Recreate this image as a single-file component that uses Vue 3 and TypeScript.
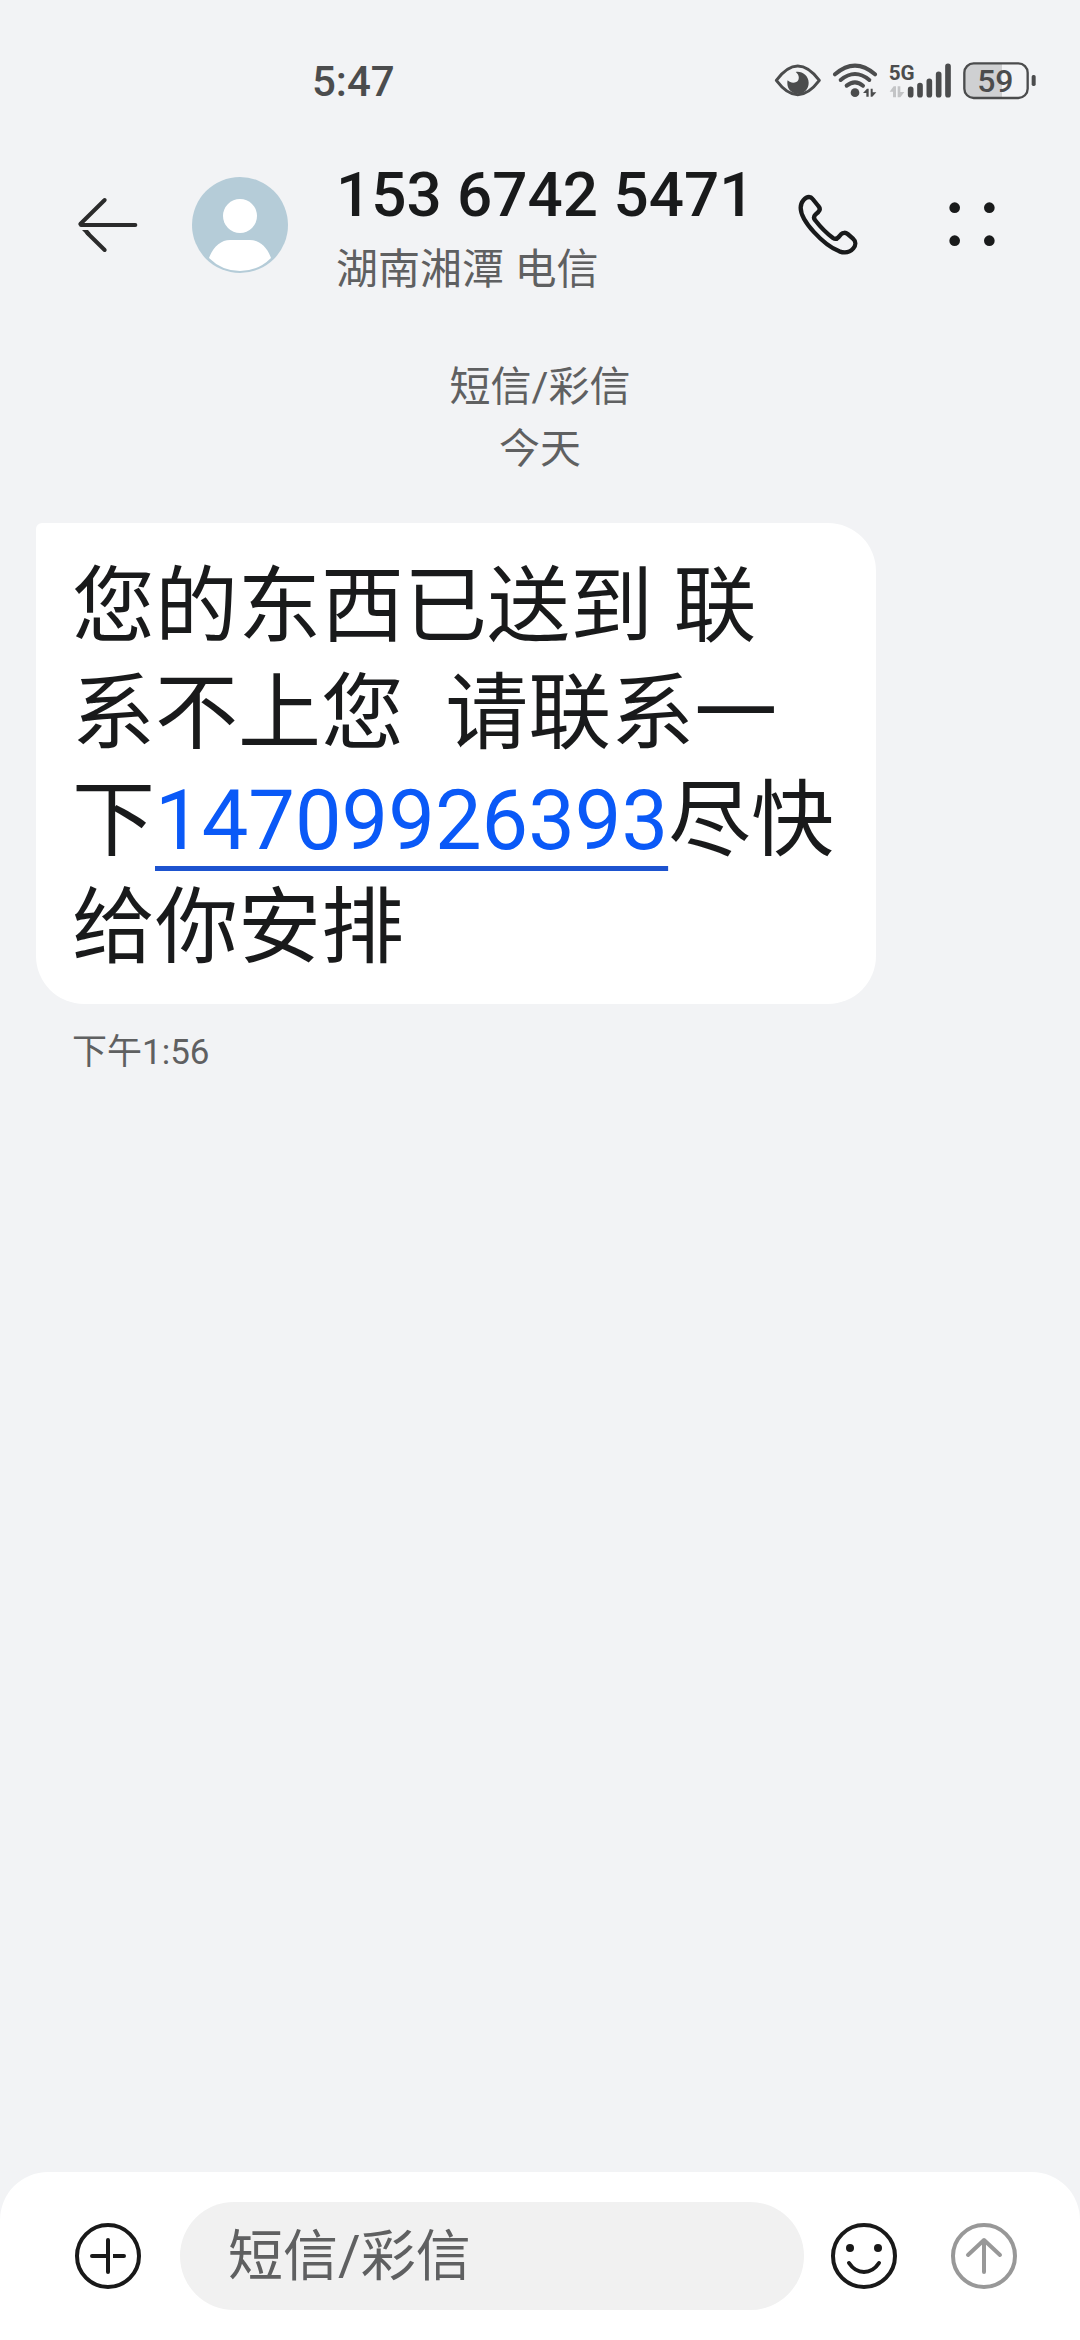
<script setup lang="ts">
import { ref } from 'vue'

const contact = { number: '153 6742 5471', region: '湖南湘潭 电信' }
const message = {
  before: '您的东西已送到 联系不上您  请联系一下',
  phone: '14709926393',
  after: '尽快给你安排',
  time: '下午1:56',
}
const draft = ref('')
</script>

<template>
  <div class="screen">
    <div class="status">
      <span class="clock">5:47</span>
      <div class="indicators">
        <svg width="48" height="38" viewBox="42 36 144 114" aria-hidden="true">
          <path d="M49 91Q113 5 178 91Q113 177 49 91Z" fill="none" stroke="#4b4c4d" stroke-width="9" stroke-linejoin="round" />
          <path d="M107 66C124 62 146 76 146 98C146 116 134 131 114 131C94 131 82 117 82 99C82 96 82 94 83 91C92 101 110 100 115 90C119 81 115 72 107 66Z" fill="#4b4c4d" />
        </svg>
        <svg width="46" height="38" viewBox="216 36 138 114" aria-hidden="true">
          <g fill="none" stroke="#4b4c4d" stroke-width="12" stroke-linecap="round">
            <path d="M225 73Q285 21 345 73" />
            <path d="M242 90Q285 54 328 90" />
            <path d="M260 107Q285 87 309 107" />
          </g>
          <circle cx="285" cy="128" r="13" fill="#4b4c4d" />
          <path d="M309 129L321 116H326V140H319V129ZM349 127L337 140H332V116H338V127Z" fill="#4b4c4d" />
        </svg>
        <svg width="64" height="38" viewBox="384 36 192 114" aria-hidden="true">
          <text x="386" y="91" class="net">5G</text>
          <path d="M389 125L401 109H408V142H399V125ZM433 126L421 142H413V109H421V126Z" fill="#c3c4c6" />
          <g stroke="#4b4c4d" stroke-width="17" stroke-linecap="round">
            <path d="M452 118V134M480 107V134M508 94V134M536 73V134M564 49V134" />
          </g>
        </svg>
        <svg width="75" height="38" viewBox="606 36 225 114" role="img" aria-label="59%">
          <path d="M640 39H726V144H640Q613 144 613 116V67Q613 39 640 39Z" fill="#cfd0d2" />
          <rect x="613" y="40" width="190" height="104" rx="28" fill="none" stroke="#4b4c4d" stroke-width="7" />
          <rect x="815" y="75" width="12" height="33" rx="5" fill="#4b4c4d" />
          <text x="706" y="126" text-anchor="middle" class="charge">59</text>
        </svg>
      </div>
    </div>

    <header class="header">
      <button class="icon" type="button" aria-label="返回">
        <svg width="72" height="72" viewBox="36 117 216 216">
          <g fill="none" stroke="#2b2b2b" stroke-width="12" stroke-linecap="round" stroke-linejoin="round">
            <path d="M134 150L61 222M63 225H226" />
            <path d="M134 300L82 249" />
          </g>
          <path d="M66 240H84L92 250L83 257Z" fill="#2b2b2b" />
        </svg>
      </button>
      <svg class="avatar" width="96" height="96" viewBox="0 0 96 96" aria-hidden="true">
        <circle cx="48" cy="48" r="48" fill="#b5ccd8" />
        <circle cx="48" cy="39" r="17" fill="#fff" />
        <path d="M17 81C21 70 29 63 38 63H58C68 63 75 70 79 81Q66 94 48 94Q30 94 17 81Z" fill="#fff" />
      </svg>
      <div class="who">
        <h1 class="number">{{ contact.number }}</h1>
        <p class="region">{{ contact.region }}</p>
      </div>
      <button class="icon" type="button" aria-label="拨打电话">
        <svg width="72" height="72" viewBox="96 87 216 216">
          <path d="M122 143C122 126 136 111 147 111C152 111 155 113 158 117L175 138C181 145 181 150 175 156L167 163C161 169 160 174 165 180C182 202 200 220 219 234C225 238 231 237 236 231L243 223C249 217 257 217 263 222L279 236C288 244 288 256 280 265C268 279 255 280 238 274C190 255 122 183 122 143Z" fill="none" stroke="#191a1b" stroke-width="13" stroke-linejoin="round" />
        </svg>
      </button>
      <button class="icon" type="button" aria-label="更多">
        <svg width="72" height="72" viewBox="528 87 216 216" fill="#191a1b">
          <circle cx="584" cy="143" r="16" />
          <circle cx="688" cy="143" r="16" />
          <circle cx="584" cy="242" r="16" />
          <circle cx="688" cy="242" r="16" />
        </svg>
      </button>
    </header>

    <main class="thread">
      <p class="label">短信/彩信</p>
      <p class="label">今天</p>
      <p class="bubble">{{ message.before }}<a class="tel" :href="'tel:' + message.phone">{{ message.phone }}</a>{{ message.after }}</p>
      <time class="time" datetime="13:56">{{ message.time }}</time>
    </main>

    <form class="composer" @submit.prevent>
      <button class="icon" type="button" aria-label="添加">
        <svg width="72" height="72" viewBox="-36 -36 72 72" fill="none" stroke="#191919" stroke-width="4" stroke-linecap="round">
          <circle r="31" />
          <path d="M0 -16V16M-16 0H0M7 0H16" />
          <path d="M5 0H8" stroke-linecap="butt" />
        </svg>
      </button>
      <input v-model="draft" class="field" type="text" placeholder="短信/彩信" aria-label="短信/彩信" />
      <button class="icon" type="button" aria-label="表情">
        <svg width="72" height="72" viewBox="-36 -36 72 72" fill="none" stroke="#191919" stroke-width="4" stroke-linecap="round">
          <circle r="31" />
          <circle cx="-14" cy="-8" r="4" fill="#191919" stroke="none" />
          <circle cx="14" cy="-8" r="4" fill="#191919" stroke="none" />
          <path d="M-15 7Q-9 16 0 16Q9 16 15 7" />
        </svg>
      </button>
      <button class="icon send" type="submit" aria-label="发送">
        <svg width="72" height="72" viewBox="-36 -36 72 72" fill="none" stroke="#989898" stroke-width="4" stroke-linecap="round" stroke-linejoin="round">
          <circle r="31" />
          <path d="M0 16V-15M-16 -1L0 -16L16 -1" />
        </svg>
      </button>
    </form>
  </div>
</template>

<style>
body {
  background: #f2f3f5;
}
</style>

<style scoped>
.screen {
  display: flex;
  flex-direction: column;
  min-height: 100vh;
  background: #f2f3f5;
  color: #191a1b;
  font-family: Roboto, "Noto Sans CJK SC", sans-serif;
}

svg {
  display: block;
}

h1,
p {
  margin: 0;
}

.icon {
  flex: none;
  width: 72px;
  height: 72px;
  padding: 0;
  border: 0;
  background: none;
}

.status {
  display: flex;
  align-items: center;
  justify-content: space-between;
  box-sizing: border-box;
  height: 120px;
  padding: 42px 43px 0 312px;
  color: #4b4c4d;
}

.clock {
  padding-top: 2px;
  font-size: 42px;
  line-height: 48px;
  font-weight: 500;
}

.indicators {
  display: flex;
  gap: 10px;
}

.net {
  font-size: 62px;
  font-weight: 700;
  fill: #4b4c4d;
}

.charge {
  font-size: 96px;
  font-weight: 500;
  fill: #4b4c4d;
}

.header {
  display: flex;
  align-items: center;
  height: 210px;
  padding: 0 72px;
}

.avatar {
  flex: none;
  margin: 0 48px;
}

.who {
  flex: 1;
  min-width: 0;
  margin-top: 4px;
}

.number {
  font-size: 62px;
  line-height: 72px;
  font-weight: 500;
  white-space: nowrap;
}

.region {
  margin-top: 14px;
  font-size: 42px;
  line-height: 50px;
  color: #5f6061;
}

.header .icon:last-child {
  margin-left: 72px;
}

.thread {
  flex: 1;
  padding: 26px 36px 0;
}

.label {
  font-size: 41px;
  line-height: 62px;
  text-align: center;
  color: #5f6061;
}

.bubble {
  margin: 43px 168px 25px 0;
  padding: 30px 38px 23px 36px;
  border-radius: 6px 48px 48px 48px;
  background: #fff;
  font-size: 83px;
  line-height: 107px;
  white-space: pre-wrap;
}

.tel {
  color: #0a59f7;
  text-decoration: underline 5px #1d53cf;
  text-underline-offset: 17px;
  text-decoration-skip-ink: none;
}

.time {
  display: block;
  padding-left: 36px;
  font-size: 35px;
  line-height: 48px;
  color: #5f6061;
}

.composer {
  display: flex;
  align-items: center;
  padding: 30px 60px 30px 72px;
  border-radius: 48px 48px 0 0;
  background: #fff;
}

.field {
  flex: 1;
  min-width: 0;
  box-sizing: border-box;
  height: 108px;
  margin: 0 24px 0 36px;
  padding: 0 48px;
  border: 0;
  border-radius: 54px;
  background: #f1f1f1;
  color: #191a1b;
  font: inherit;
  font-size: 55px;
}

.field::placeholder {
  color: #5f6061;
  opacity: 1;
}

.send {
  margin-left: 48px;
}
</style>
